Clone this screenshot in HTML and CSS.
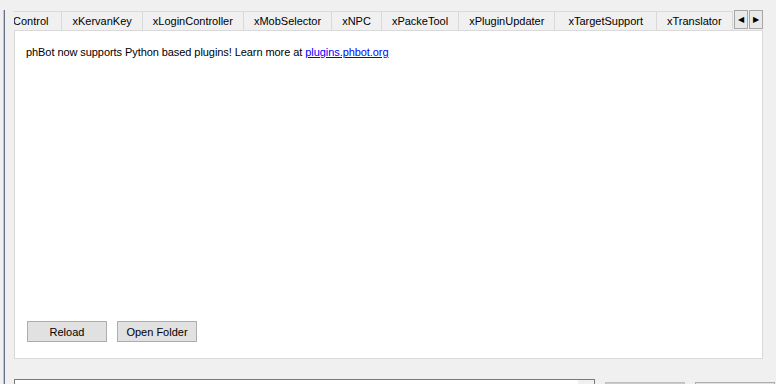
FILE: index.html
```html
<!DOCTYPE html>
<html lang="en">
<head>
    <meta charset="UTF-8">
    <meta name="viewport" content="width=device-width, initial-scale=1.0">
    <title>phBot Plugins</title>
    <link rel="stylesheet" href="styles.css">
</head>
<body>

    <div class="frame">
        <div class="rail"></div>

        <div class="plugins">
            <div class="tabs">
                <ul class="tab-list">
                    <li class="tab first">Control</li>
                    <li class="tab">xKervanKey</li>
                    <li class="tab">xLoginController</li>
                    <li class="tab">xMobSelector</li>
                    <li class="tab">xNPC</li>
                    <li class="tab">xPackeTool</li>
                    <li class="tab">xPluginUpdater</li>
                    <li class="tab roomy">xTargetSupport</li>
                    <li class="tab">xTranslator</li>
                </ul>
                <div class="tab-scroll">
                    <button class="arrow">&#9664;</button>
                    <button class="arrow">&#9654;</button>
                </div>
            </div>

            <div class="tab-page">
                <p class="notice">phBot now supports Python based plugins! Learn more at <a href="#">plugins.phbot.org</a></p>
                <div class="actions">
                    <button class="btn">Reload</button>
                    <button class="btn">Open Folder</button>
                </div>
            </div>

            <div class="status-row">
                <div class="log">
                    <div class="log-text">[i] Loaded 9 plugins from the Plugins folder</div>
                    <div class="log-scroll"></div>
                </div>
                <button class="btn wide disabled"></button>
                <button class="btn wide"></button>
            </div>
        </div>
    </div>

</body>
</html>
```

FILE: styles.css
```css
body {
    font-family: "Liberation Sans", Arial, sans-serif;
    font-size: 11px;
    color: #000;
    background-color: #f0f0f0;
    margin: 0;
    padding: 0;
    width: 776px;
    height: 384px;
    overflow: hidden;
}

.frame {
    display: flex;
    padding-left: 3px;
    height: 384px;
}

.rail {
    margin-top: 10px;
    width: 1px;
    border-left: 1px solid #c4c4c4;
    background-color: #66738b;
}

.plugins {
    margin-left: 9px;
    padding-top: 10px;
    width: 762px;
}

/* tab header */

.tabs {
    display: flex;
    width: 749px;
    height: 20px;
}

.tab-list {
    list-style: none;
    margin: 0;
    padding: 0;
    display: flex;
    flex: 1;
    overflow: hidden;
    padding-top: 1px;
}

.tab {
    flex: none;
    padding: 0 10px;
    line-height: 18px;
    border-top: 1px solid #d9d9d9;
    border-right: 1px solid #d9d9d9;
    white-space: nowrap;
}

.tab.first {
    margin-left: -11px;
    padding-right: 13px;
}

.tab.roomy {
    padding: 0 13px;
}

.tab-scroll {
    display: flex;
    gap: 1px;
    margin-left: 1px;
}

.arrow {
    width: 14px;
    height: 19px;
    padding: 0;
    border: 1px solid #a6a6a6;
    background-color: #e9e9e9;
    font-size: 8px;
    line-height: 17px;
    color: #000;
    font-family: "DejaVu Sans", sans-serif;
}

/* tab page */

.tab-page {
    display: flex;
    flex-direction: column;
    width: 747px;
    height: 327px;
    background-color: #fff;
    border: 1px solid #d9d9d9;
}

.notice {
    margin: 0;
    padding: 15px 0 0 11px;
    line-height: 13px;
    letter-spacing: -0.07px;
}

.notice a {
    color: #0000ff;
}

.actions {
    margin-top: auto;
    display: flex;
    gap: 10px;
    padding: 0 0 16px 12px;
}

.btn {
    width: 80px;
    height: 21px;
    padding: 0;
    border: 1px solid #adadad;
    background-color: #e1e1e1;
    font-family: inherit;
    font-size: 11px;
    color: #000;
}

/* bottom row */

.status-row {
    display: flex;
    align-items: flex-start;
    margin-top: 20px;
}

.log {
    display: flex;
    width: 579px;
    height: 20px;
    border: 1px solid #7a7a7a;
    background-color: #fff;
    overflow: hidden;
}

.log-text {
    flex: 1;
    padding: 0 4px;
    margin-top: 2px;
    white-space: nowrap;
}

.log-scroll {
    width: 16px;
    background-color: #f0f0f0;
}

.wide {
    margin-top: 3px;
    margin-left: 10px;
}

.wide.disabled {
    background-color: #cccccc;
    border-color: #bfbfbf;
}
```
